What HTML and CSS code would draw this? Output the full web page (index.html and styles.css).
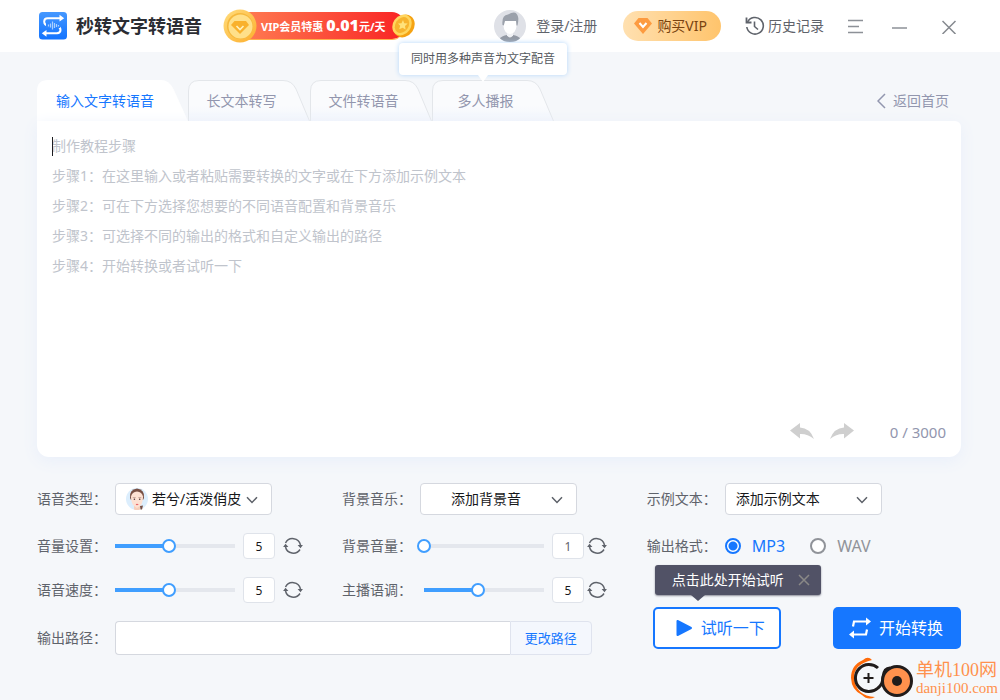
FILE: index.html
```html
<!DOCTYPE html>
<html lang="zh-CN">
<head>
<meta charset="utf-8">
<title>秒转文字转语音</title>
<link rel="stylesheet" href="styles.css">
</head>
<body>
<svg class="defs" aria-hidden="true">
  <defs>
    <linearGradient id="g-logo" x1="0" y1="0" x2="0" y2="1"><stop offset="0" stop-color="#4598ff"/><stop offset="1" stop-color="#1273ff"/></linearGradient>
    <linearGradient id="g-coin" x1="0" y1="0" x2="1" y2="1"><stop offset="0" stop-color="#ffdd7d"/><stop offset="1" stop-color="#fdae2c"/></linearGradient>
    <linearGradient id="g-tab" x1="0" y1="0" x2="0" y2="1"><stop offset="0.6" stop-color="#fafbfd"/><stop offset="1" stop-color="#f3f6fd"/></linearGradient>
    <symbol id="chevron" viewBox="0 0 12 8"><path d="M1 1.2 6 6.4 11 1.2" fill="none" stroke="#5c6068" stroke-width="1.5"/></symbol>
    <symbol id="refresh" viewBox="0 0 20 18"><path d="M2.500 6A8 8 0 0 1 17.500 8M17 12.500A8 8 0 0 1 2.500 10" fill="none" stroke="#5f636b" stroke-width="1.500"/><path d="M14.600 8h5.300l-2.400 3.200zM.1 10h5.300L2.500 6.800z" fill="#5f636b"/></symbol>
    <symbol id="tab-shape" viewBox="0 0 122 41"><path d="M.5 41V11Q.5.5 11 .5H95Q104 .5 108 9L121.500 41" fill="url(#g-tab)" stroke="#e3e6ea"/></symbol>
  </defs>
</svg>

<header class="header">
  <div class="brand">
    <svg width="28" height="28" viewBox="0 0 28 28" aria-hidden="true"><rect width="28" height="27.500" rx="3.500" fill="url(#g-logo)"/><path d="M22 6.200H8.700Q5.200 6.200 5.200 9.500 5.200 13 9 13.500L18 14.500Q21.500 15 21.500 18T18 21.300H6" fill="none" stroke="#fff" stroke-width="2"/><path d="M20.500 2.700 25.200 6.200 20.500 9.500zM7.500 18 2.800 21.300 7.500 24.800z" fill="#fff"/><path d="M7 13.500H21" stroke="#2f87ff" stroke-width="5"/><path d="M9.500 12.500v2M11.500 11.500v4M13.500 9.500v8M15.500 11v5M17.500 12v3M19.500 13v1.500" stroke="#a9d0ff" stroke-width="1.200"/></svg>
    <h1 class="brand-name">秒转文字转语音</h1>
  </div>
  <a class="promo" href="#vip">
    <svg class="promo-coin" width="34" height="34" viewBox="0 0 34 34" aria-hidden="true"><circle cx="17" cy="17" r="16.500" fill="url(#g-coin)"/><circle cx="17" cy="17" r="13" fill="#f5b83c"/><circle cx="17.500" cy="17.500" r="12" fill="#ffe08a"/><path d="M11.500 12H23l3 4-9 9-9-9z" fill="#f9b12c"/><path d="m13.500 17 3.500 3.500 3.500-3.500" fill="none" stroke="#fff2bd" stroke-width="1.600"/></svg>
    <span class="promo-text">VIP会员特惠 <b class="promo-price">0.01</b>元/天</span>
    <svg class="promo-end" width="24" height="26" viewBox="0 0 24 26" aria-hidden="true"><ellipse cx="13" cy="13" rx="10" ry="12" transform="rotate(35 13 13)" fill="#f5a313"/><ellipse cx="11" cy="12" rx="9" ry="11" transform="rotate(35 11 12)" fill="#ffd65e"/><ellipse cx="11" cy="12" rx="6.500" ry="8.500" transform="rotate(35 11 12)" fill="#f7b42e"/><path d="m12 7 1.200 3.300 3.500.3-2.700 2.300.6 3.600-3-1.800-3.400 1.600 1-3.600L7 10.400l3.500-.2z" fill="#ffe27b"/></svg>
  </a>
  <nav class="header-actions">
    <a class="login" href="#login">
      <svg width="32" height="32" viewBox="0 0 32 32" aria-hidden="true"><circle cx="16" cy="16" r="16" fill="#dfe1e7"/><path d="M6 28.500Q8 25.500 13 25h6q5 .5 7 3.500Q22 32 16 32T6 28.500z" fill="#9399a4"/><path d="M13 21h6v4.500q-3 4-6 0z" fill="#f1f2f5"/><path d="M9.500 10h13v6q-.5 7-6.500 8-6-1-6.500-8z" fill="#fff"/><path d="M8.500 15Q7.500 5 14 4.500 23-1 24.300 8q.2 4-.8 7.500h-1L22 11H11l-1.200 4.500z" fill="#9ba1ab"/></svg>
      <span>登录/注册</span>
    </a>
    <button class="buy" type="button">
      <svg width="18" height="16" viewBox="0 0 18 16" aria-hidden="true"><path d="M4.500 0h9L18 5.500 9 16 0 5.500z" fill="#fd9b40"/><path d="m5.500 5 3.500 4 3.500-4" fill="none" stroke="#fff" stroke-width="2"/></svg>
      <span>购买VIP</span>
    </button>
    <a class="history" href="#history">
      <svg width="20" height="20" viewBox="0 0 20 20" aria-hidden="true"><path d="M2.600 6A8.300 8.300 0 1 1 1.800 11M9.500 5.500v5l3.500 3" fill="none" stroke="#5f636b" stroke-width="1.600"/><path d="M1.500 1.500v5h5" fill="none" stroke="#5f636b" stroke-width="1.800"/></svg>
      <span>历史记录</span>
    </a>
    <button class="icon-btn" type="button" aria-label="菜单"><svg width="16" height="16" viewBox="0 0 16 16"><path d="M0 2.500h15M0 8.500h11M0 14.500h15" stroke="#8d9197" stroke-width="1.500"/></svg></button>
    <button class="icon-btn" type="button" aria-label="最小化"><svg width="16" height="16" viewBox="0 0 16 16"><path d="M0 10h15" stroke="#8d9197" stroke-width="1.500"/></svg></button>
    <button class="icon-btn close" type="button" aria-label="关闭"><svg width="16" height="16" viewBox="0 0 16 16"><path d="M.5 3 13.500 16M13.500 3 .5 16" stroke="#85898f" stroke-width="1.500"/></svg></button>
  </nav>
</header>

<main class="main">
  <div class="tab-bar">
    <div class="tabs" role="tablist">
      <button class="tab tab-active" type="button" role="tab" aria-selected="true"><svg class="tab-bg" viewBox="0 0 151 41" aria-hidden="true"><path d="M0 41V11Q0 0 11 0H124Q132 0 136.500 9L151 41z" fill="#fff"/></svg><span class="tab-label">输入文字转语音</span></button>
      <button class="tab" type="button" role="tab"><svg class="tab-bg" aria-hidden="true"><use href="#tab-shape"/></svg><span class="tab-label">长文本转写</span></button>
      <button class="tab" type="button" role="tab"><svg class="tab-bg" aria-hidden="true"><use href="#tab-shape"/></svg><span class="tab-label">文件转语音</span></button>
      <div class="tab-anchor">
        <button class="tab" type="button" role="tab" aria-describedby="multi-tip"><svg class="tab-bg" aria-hidden="true"><use href="#tab-shape"/></svg><span class="tab-label">多人播报</span></button>
        <div class="tip" id="multi-tip" role="tooltip">同时用多种声音为文字配音</div>
      </div>
    </div>
    <a class="back" href="#home"><svg width="9" height="16" viewBox="0 0 9 16" aria-hidden="true"><path d="M8 1 1 8l7 7" fill="none" stroke="#9296ae" stroke-width="1.500"/></svg><span>返回首页</span></a>
  </div>

  <section class="editor">
    <span class="caret"></span>
    <textarea class="editor-text" aria-label="文本内容" placeholder="制作教程步骤&#10;步骤1：在这里输入或者粘贴需要转换的文字或在下方添加示例文本&#10;步骤2：可在下方选择您想要的不同语音配置和背景音乐&#10;步骤3：可选择不同的输出的格式和自定义输出的路径&#10;步骤4：开始转换或者试听一下"></textarea>
    <div class="editor-foot">
      <button class="icon-btn" type="button" aria-label="撤销"><svg width="24" height="18" viewBox="0 0 24 18"><path d="M10 0v4.500Q20 5 24 16 17 10.500 10 11v4.500L0 7.500z" fill="#cfcfcf"/></svg></button>
      <button class="icon-btn" type="button" aria-label="重做"><svg width="24" height="18" viewBox="0 0 24 18"><path d="M14 0v4.500Q4 5 0 16 7 10.500 14 11v4.500l10-8z" fill="#cfcfcf"/></svg></button>
      <span class="count">0 / 3000</span>
    </div>
  </section>

  <form class="settings">
    <div class="left">
      <div class="row">
        <label class="label" for="voice">语音类型：</label>
        <div class="select-wrap">
          <select class="select select-voice" id="voice"><option>若兮/活泼俏皮</option></select>
          <svg class="face" width="22" height="22" viewBox="0 0 22 22" aria-hidden="true"><circle cx="11" cy="11" r="11" fill="#dceefd"/><path d="M4 10Q3 2 11 .6 19 2 18 10l-1 2H5z" fill="#795044"/><path d="M8 16h6v5.500q-3 1-6 0z" fill="#f7cfbb"/><path d="M5 8.500Q6 4 11 3.500 16 4 17 8.500 17.500 17 11 20 4.500 17 5 8.500z" fill="#fde1d3"/><path d="M6.700 9.600h3M12.300 9.600h3" stroke="#a88072" stroke-width=".6"/><circle cx="8.400" cy="11.300" r=".8" fill="#50383a"/><circle cx="13.700" cy="11.300" r=".8" fill="#50383a"/><path d="M9.900 16.500h2.400" stroke="#e8666a" stroke-width="1.200"/><path d="m14 18 3-.5-1 4h-1.500z" fill="#795044"/></svg>
          <svg class="select-arrow" aria-hidden="true"><use href="#chevron"/></svg>
        </div>
      </div>
      <div class="row">
        <label class="label" for="music">背景音乐：</label>
        <div class="select-wrap">
          <select class="select select-music" id="music"><option>添加背景音</option></select>
          <svg class="select-arrow" aria-hidden="true"><use href="#chevron"/></svg>
        </div>
      </div>
      <div class="row">
        <label class="label" for="volume">音量设置：</label>
        <input class="slider" id="volume" type="range" min="0" max="100" value="45" style="--fill:54px">
        <input class="value" type="text" value="5" aria-label="音量数值">
        <button class="icon-btn reset" type="button" aria-label="重置音量"><svg width="20" height="18"><use href="#refresh"/></svg></button>
      </div>
      <div class="row row-shift">
        <label class="label" for="bgvolume">背景音量：</label>
        <input class="slider" id="bgvolume" type="range" min="0" max="100" value="0" style="--fill:0px">
        <input class="value value-muted" type="text" value="1" aria-label="背景音量数值">
        <button class="icon-btn reset" type="button" aria-label="重置背景音量"><svg width="20" height="18"><use href="#refresh"/></svg></button>
      </div>
      <div class="row">
        <label class="label" for="speed">语音速度：</label>
        <input class="slider" id="speed" type="range" min="0" max="100" value="45" style="--fill:54px">
        <input class="value" type="text" value="5" aria-label="语速数值">
        <button class="icon-btn reset" type="button" aria-label="重置语速"><svg width="20" height="18"><use href="#refresh"/></svg></button>
      </div>
      <div class="row row-shift">
        <label class="label" for="pitch">主播语调：</label>
        <input class="slider" id="pitch" type="range" min="0" max="100" value="45" style="--fill:54px">
        <input class="value" type="text" value="5" aria-label="语调数值">
        <button class="icon-btn reset" type="button" aria-label="重置语调"><svg width="20" height="18"><use href="#refresh"/></svg></button>
      </div>
      <div class="row row-path">
        <label class="label" for="path">输出路径：</label>
        <input class="path" id="path" type="text">
        <button class="path-btn" type="button">更改路径</button>
      </div>
    </div>

    <div class="right">
      <div class="row">
        <label class="label" for="sample">示例文本：</label>
        <div class="select-wrap">
          <select class="select select-sample" id="sample"><option>添加示例文本</option></select>
          <svg class="select-arrow" aria-hidden="true"><use href="#chevron"/></svg>
        </div>
      </div>
      <div class="row" role="radiogroup" aria-labelledby="format-label">
        <span class="label" id="format-label">输出格式：</span>
        <label class="format"><input class="radio" type="radio" name="format" checked><span>MP3</span></label>
        <label class="format"><input class="radio" type="radio" name="format"><span>WAV</span></label>
      </div>
      <div class="actions">
        <div class="preview-wrap">
          <button class="action preview" type="button"><svg width="18" height="18" viewBox="0 0 18 18" aria-hidden="true"><path d="M2.500 2v14L16 9z" fill="#1677ff" stroke="#1677ff" stroke-width="2" stroke-linejoin="round"/></svg><span>试听一下</span></button>
          <div class="hint" role="status"><span>点击此处开始试听</span><button class="icon-btn" type="button" aria-label="关闭提示"><svg width="12" height="12" viewBox="0 0 12 12"><path d="m1 1 10 10M11 1 1 11" stroke="#8a8987" stroke-width="1.500"/></svg></button></div>
        </div>
        <button class="action convert" type="button"><svg width="22" height="22" viewBox="0 0 22 22" aria-hidden="true"><path d="M4 9.500 5 4.500H18M18 12.500 17 17.500H4" fill="none" stroke="#fff" stroke-width="2.200"/><path d="m17 .5 5 4-5 4zM5 13.500l-5 4 5 4z" fill="#fff"/></svg><span>开始转换</span></button>
      </div>
    </div>
  </form>
</main>

<div class="mark">
  <svg width="64" height="44" viewBox="0 0 64 44" aria-hidden="true"><path d="M22 4Q18-.5 13 4 1 9 1 22 1.500 34 12 39q6 6 13 2-19-1-21-19Q4 8 22 4z" fill="#ff6b0a"/><path d="M28 12A13.500 13.500 0 1 0 28 32Q33 28 33 21 34 12 40 12" fill="none" stroke="#211c1b" stroke-width="3"/><path d="M18.500 17v10M13.500 22h10" stroke="#211c1b" stroke-width="2"/><circle cx="47" cy="25" r="14.500" fill="#ff914d" stroke="#211c1b" stroke-width="3"/><circle cx="47" cy="25" r="5" fill="#211c1b"/></svg>
  <div class="mark-text"><span class="mark-name">单机100网</span><span class="mark-url">danji100.com</span></div>
</div>
</body>
</html>
```
FILE: styles.css
```css
* {
  box-sizing: border-box;
}

body {
  position: relative;
  display: flex;
  flex-direction: column;
  min-height: 100vh;
  margin: 0;
  background: #f5f7fa;
  color: #5f636b;
  font: 14px/20px "Noto Sans", "Noto Sans CJK SC", sans-serif;
}

button,
input,
select,
textarea {
  margin: 0;
  padding: 0;
  border: 0;
  background: none;
  color: inherit;
  font: inherit;
  outline: none;
}

a {
  color: inherit;
  text-decoration: none;
}

svg {
  display: block;
  flex: none;
}

.defs {
  position: absolute;
  width: 0;
  height: 0;
}

.icon-btn {
  display: flex;
  align-items: center;
}

/* Header */
.header {
  display: flex;
  align-items: center;
  height: 52px;
  padding: 0 42px 0 39px;
  background: #fff;
}

.brand {
  display: flex;
  align-items: center;
  gap: 9px;
}

.brand-name {
  margin: 0;
  color: #2b2d33;
  font-size: 18px;
  line-height: 28px;
  font-weight: 700;
}

.promo {
  display: flex;
  align-items: center;
  height: 28px;
  margin-left: 30px;
  border-bottom: 1px solid #ffb04c;
  border-radius: 12px;
  background: linear-gradient(90deg, #ff8155, #f92424);
  background-clip: padding-box;
  color: #fff;
  white-space: nowrap;
}

.promo-coin {
  margin-left: -9px;
}

.promo-text {
  margin: 0 6px 0 4px;
  font-size: 11px;
  font-weight: 700;
}

.promo-price {
  font-size: 16px;
}

.promo-end {
  margin-right: -11px;
}

.header-actions {
  display: flex;
  align-items: center;
  gap: 24px;
  margin-left: auto;
  white-space: nowrap;
}

.login {
  display: flex;
  align-items: center;
  gap: 10px;
  margin-right: 2px;
}

.buy {
  display: flex;
  align-items: center;
  gap: 5px;
  height: 30px;
  padding: 0 14px 0 11px;
  border-radius: 15px;
  background: linear-gradient(90deg, #ffe0b0, #ffc46c);
  color: #7a4310;
}

.history {
  display: flex;
  align-items: center;
  gap: 3px;
}

.header-actions .icon-btn + .icon-btn {
  margin-left: 4px;
}

.header-actions .close {
  padding-left: 6px;
}

/* Tabs */
.main {
  display: flex;
  flex: 1;
  flex-direction: column;
  padding: 28px 39px 45px 37px;
}

.tab-bar {
  display: flex;
  align-items: center;
  justify-content: space-between;
  color: #9296ae;
}

.tabs {
  display: flex;
}

.tab-anchor {
  position: relative;
}

.tab {
  display: grid;
  width: 122px;
  height: 41px;
}

.tab-active {
  width: 151px;
  color: #1677ff;
}

.tab-bg,
.tab-label {
  grid-area: 1 / 1;
}

.tab-bg {
  width: 100%;
  height: 41px;
}

.tab-label {
  place-self: center;
  padding-right: 15px;
}

.tip {
  position: absolute;
  bottom: 46px;
  left: -33px;
  padding: 6px 12px;
  border-radius: 4px;
  background: #fff;
  box-shadow: 0 0 5px #b4d6fa;
  color: #555960;
  font-size: 12px;
  white-space: nowrap;
}

.tip::after {
  position: absolute;
  top: 100%;
  left: 50%;
  margin-left: -5px;
  border: 5px solid transparent;
  border-top: 7px solid #fff;
  border-bottom: 0;
  content: "";
}

.back {
  display: flex;
  align-items: center;
  gap: 7px;
  padding-right: 12px;
}

/* Editor */
.editor {
  position: relative;
  display: flex;
  flex: 1;
  flex-direction: column;
  margin-bottom: 26px;
  padding: 10px 15px;
  border-radius: 0 6px 12px 12px;
  background: #fff;
  box-shadow: 0 4px 16px #e9effa;
}

.caret {
  position: absolute;
  top: 16px;
  left: 15px;
  width: 1px;
  height: 19px;
  background: #1b1c20;
}

.editor-text {
  flex: 1;
  color: #303133;
  line-height: 30px;
  resize: none;
}

.editor-text::placeholder {
  color: #c0c4cc;
}

.editor-foot {
  display: flex;
  align-items: center;
  justify-content: flex-end;
  gap: 16px;
  height: 30px;
  color: #9296ae;
}

.count {
  margin-left: 20px;
  font-size: 15px;
}

/* Settings */
.settings {
  display: grid;
  grid-template-columns: 66fr 34fr;
}

.left {
  display: grid;
  grid-template-columns: 1fr 1fr;
  align-content: start;
  row-gap: 18px;
}

.row {
  display: flex;
  align-items: center;
}

.label {
  flex: none;
  width: 78px;
}

.select-wrap {
  position: relative;
  width: 157px;
}

.select {
  display: block;
  width: 100%;
  height: 32px;
  border: 1px solid #d5d8df;
  border-radius: 4px;
  background: #fff;
  color: #17181b;
  appearance: none;
}

.select-voice {
  padding-left: 36px;
}

.select-music {
  padding-left: 30px;
}

.select-sample {
  padding-left: 10px;
}

.select-arrow {
  position: absolute;
  top: 13px;
  right: 14px;
  width: 12px;
  height: 8px;
  pointer-events: none;
}

.face {
  position: absolute;
  top: 5px;
  left: 11px;
  pointer-events: none;
}

.slider {
  width: 134px;
  height: 14px;
  margin: 0 1px 0 -7px;
  background:
    linear-gradient(#409eff, #409eff) 7px center / var(--fill) 4px no-repeat,
    linear-gradient(#e4e7ed, #e4e7ed) 7px center / 120px 4px no-repeat;
  appearance: none;
}

.slider::-webkit-slider-thumb {
  width: 14px;
  height: 14px;
  border: 2px solid #409eff;
  border-radius: 50%;
  background: #fff;
  appearance: none;
}

.value {
  width: 32px;
  height: 26px;
  border: 1px solid #dfe3ea;
  border-radius: 4px;
  background: #fff;
  color: #17181b;
  font-size: 12px;
  text-align: center;
}

.value-muted {
  color: #5f636b;
}

.reset {
  margin-left: 8px;
}

.row-shift .label {
  width: 82px;
}

.row-shift .reset {
  margin-left: 3px;
}

.row-path {
  grid-column: 1 / -1;
  padding-right: 55px;
}

.path {
  flex: 1;
  height: 34px;
  border: 1px solid #d5d8df;
  border-right: 0;
  border-radius: 4px 0 0 4px;
  background: #fff;
}

.path-btn {
  height: 34px;
  padding: 0 14px;
  border: 1px solid #dfe3ee;
  border-radius: 0 4px 4px 0;
  background: #f4f7fd;
  color: #1677ff;
  font-size: 13px;
}

.right {
  display: flex;
  flex-direction: column;
  gap: 18px;
}

.format {
  display: flex;
  align-items: center;
  gap: 11px;
  height: 26px;
  margin-right: 25px;
  color: #909399;
  font-size: 16px;
}

.radio {
  width: 16px;
  height: 16px;
  border: 2px solid #909399;
  border-radius: 50%;
  background: #fff;
  appearance: none;
}

.radio:checked {
  border-color: #1677ff;
  background: radial-gradient(#1677ff 4px, #fff 5px);
}

.format:has(:checked) {
  color: #1677ff;
}

.actions {
  display: flex;
  justify-content: space-between;
  margin-top: 30px;
  padding-left: 6px;
}

.preview-wrap {
  position: relative;
}

.action {
  display: flex;
  align-items: center;
  justify-content: center;
  gap: 8px;
  width: 128px;
  height: 42px;
  padding-right: 2px;
  border-radius: 5px;
  font-size: 16px;
}

.preview {
  padding: 0 0 0 6px;
  border: 2px solid #1677ff;
  background: #fff;
  color: #1677ff;
}

.convert {
  background: #1677ff;
  color: #fff;
}

.hint {
  position: absolute;
  bottom: 54px;
  left: 2px;
  display: flex;
  align-items: center;
  gap: 14px;
  padding: 5px 11px 5px 17px;
  border-radius: 3px;
  background: #515266;
  box-shadow: 0 1px 2px #8c8d99;
  color: #fff;
  white-space: nowrap;
}

.hint::after {
  position: absolute;
  top: 100%;
  left: 36px;
  border: 7px solid transparent;
  border-top: 6px solid #515266;
  border-bottom: 0;
  content: "";
}

/* Corner mark */
.mark {
  position: absolute;
  right: 2px;
  bottom: 0;
  display: flex;
  gap: 2px;
  color: #ff914d;
  font-family: "Liberation Serif", "Noto Sans CJK SC", serif;
  white-space: nowrap;
}

.mark-text {
  display: flex;
  flex-direction: column;
  padding-top: 4px;
}

.mark-name {
  font-size: 18px;
}

.mark-url {
  font-size: 15px;
  line-height: 16px;
}
```
